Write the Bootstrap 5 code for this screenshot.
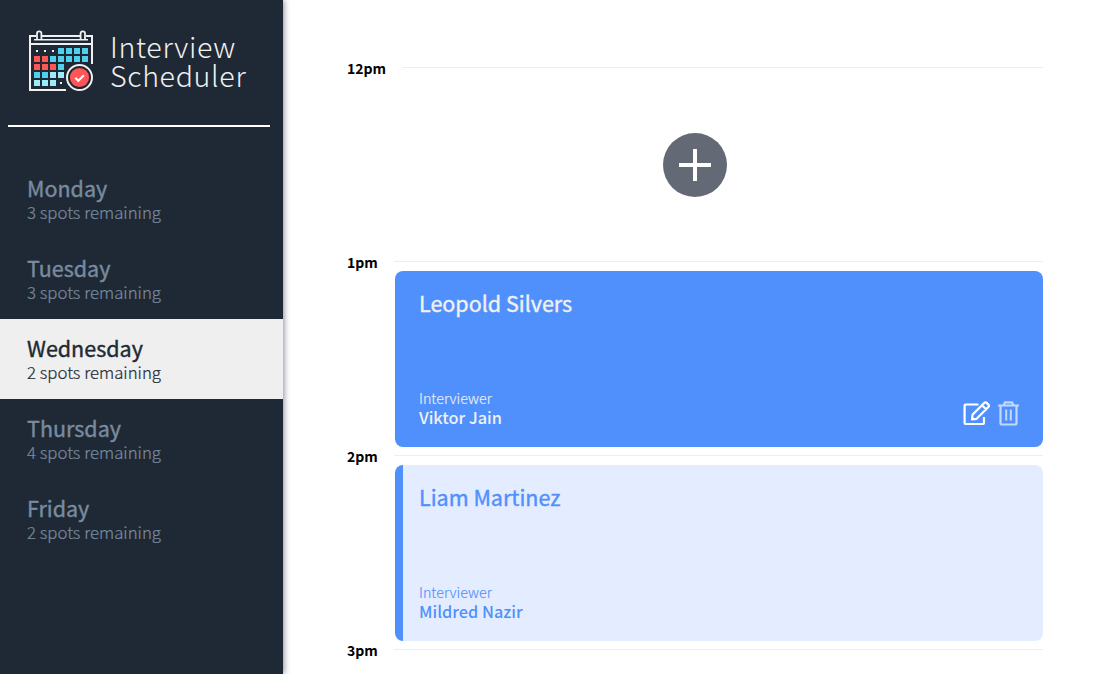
<!DOCTYPE html>
<html lang="en">
<head>
<meta charset="utf-8">
<meta name="viewport" content="width=device-width, initial-scale=1">
<title>Interview Scheduler</title>
<link href="https://cdn.jsdelivr.net/npm/bootstrap@5.3.0/dist/css/bootstrap.min.css" rel="stylesheet">
<style>
  body { font-family: "Noto Sans CJK SC", "Open Sans", sans-serif; color: #000; }
  .sidebar { width: 283px; background: #1f2935; box-shadow: 1px 0 6px rgba(20, 25, 50, .5); z-index: 1; }
  .brand { height: 125px; padding: 26px 0 0 24px; }
  .brand-name { font-size: 28.6px; line-height: 29px; font-weight: 200; letter-spacing: .65px; color: #f0f0f0; padding: 5px 0 0 13px; }
  .divider { height: 2px; margin: 0 13px 32px 8px; background: #fff; }
  .day { height: 80px; padding: 17px 0 0 27px; color: #788b9f; text-decoration: none; }
  .day.active { background: #efefef; color: #1f2935; }
  .day-name { font-size: 21.5px; line-height: 24px; font-weight: 400; -webkit-text-stroke: .4px currentColor; }
  .day-spots { font-size: 16.8px; line-height: 24px; font-weight: 300; -webkit-text-stroke: .2px currentColor; }
  .schedule { padding: 59px 64px 0 64px; }
  .hour { height: 18px; }
  .hour-label { font-size: 14px; line-height: 18px; font-weight: 700; }
  .hour-line { height: 1px; background: #eee; margin: 8px 0 0 16px; }
  .slot { height: 176px; }
  .add { width: 64px; height: 64px; background: #646a75; }
  .booking { margin-left: 48px; border-radius: 8px; padding: 19px 24px 20px 24px; }
  .booked { background: #5090fc; color: #f0f0f0; }
  .available { background: linear-gradient(90deg, #5090fc 8px, #e4edff 8px); color: #5090fc; }
  .student { font-size: 21.5px; line-height: 26px; font-weight: 400; -webkit-text-stroke: .4px currentColor; }
  .role { font-size: 14.3px; line-height: 18px; font-weight: 300; -webkit-text-stroke: .15px currentColor; }
  .interviewer { font-size: 16.3px; line-height: 20px; font-weight: 500; }
  .actions { gap: 7px; padding-top: 10px; }
</style>
</head>
<body>
<div class="d-flex vh-100 overflow-hidden">
  <aside class="sidebar flex-shrink-0 position-relative">
    <div class="brand d-flex">
      <svg width="73" height="72" viewBox="24 26 73 72" fill="none" class="flex-shrink-0">
        <g stroke="#f0f0f0" stroke-width="2">
          <path d="M36 36H30V90H66M41 36H80M86 36H92V64M30 44H92"/>
          <path d="M34 39.7H88" stroke-width="1.5"/>
          <path d="M37 39V33.5a2.2 2.2 0 0 1 4.400 0V39M80.600 39V33.500a2.200 2.200 0 0 1 4.400 0V39" stroke-width="1.800"/>
        </g>
        <path fill="#f0f0f0" d="M36 50h2v2h-2zM44 50h2v2h-2zM52 50h2v2h-2zM60 82h2v2h-2z"/>
        <path fill="#4fd1ee" d="M58 48h6v6h-6zM66 48h6v6h-6zM74 48h6v6h-6zM82 48h6v6h-6zM50 56h6v6h-6zM58 56h6v6h-6zM66 56h6v6h-6zM74 56h6v6h-6zM82 56h6v6h-6zM58 64h6v6h-6zM34 72h6v6h-6zM42 72h6v6h-6z"/>
        <path fill="#ff5555" d="M34 56h6v6h-6zM42 56h6v6h-6zM34 64h6v6h-6zM42 64h6v6h-6zM50 64h6v6h-6z"/>
        <path fill="#9eeaf9" d="M50 72h6v6h-6zM58 72h6v6h-6zM34 80h6v6h-6zM42 80h6v6h-6zM50 80h6v6h-6z"/>
        <circle cx="79.500" cy="77.500" r="12.500" fill="#1f2935" stroke="#f0f0f0" stroke-width="2"/>
        <circle cx="79.500" cy="77.500" r="9.600" fill="#ff5555"/>
        <path d="M75.300 77.800l3 3 5.600-5.500" stroke="#fff" stroke-width="2"/>
      </svg>
      <div class="brand-name">Interview<br>Scheduler</div>
    </div>
    <div class="divider"></div>
    <nav class="d-flex flex-column">
      <a class="day"><div class="day-name">Monday</div><div class="day-spots">3 spots remaining</div></a>
      <a class="day"><div class="day-name">Tuesday</div><div class="day-spots">3 spots remaining</div></a>
      <a class="day active"><div class="day-name">Wednesday</div><div class="day-spots">2 spots remaining</div></a>
      <a class="day"><div class="day-name">Thursday</div><div class="day-spots">4 spots remaining</div></a>
      <a class="day"><div class="day-name">Friday</div><div class="day-spots">2 spots remaining</div></a>
    </nav>
  </aside>
  <main class="schedule flex-grow-1">
    <div class="hour d-flex"><div class="hour-label">12pm</div><div class="hour-line flex-grow-1"></div></div>
    <div class="slot d-flex align-items-center justify-content-center">
      <div class="add rounded-circle d-flex align-items-center justify-content-center">
        <svg width="32" height="32" viewBox="0 0 32 32"><path d="M16 0V32M0 16H32" stroke="#fff" stroke-width="4"/></svg>
      </div>
    </div>
    <div class="hour d-flex"><div class="hour-label">1pm</div><div class="hour-line flex-grow-1"></div></div>
    <div class="slot booking booked d-flex flex-column justify-content-between">
      <div class="student">Leopold Silvers</div>
      <div class="d-flex justify-content-between align-items-center">
        <div><div class="role">Interviewer</div><div class="interviewer">Viktor Jain</div></div>
        <div class="actions d-flex">
          <svg width="28" height="26" viewBox="0 -0.500 28 26" fill="none" stroke="#fff" stroke-width="2.200" stroke-linejoin="round">
            <path d="M15.500 4H2.600a1 1 0 0 0-1 1V22.500a1 1 0 0 0 1 1H20a1 1 0 0 0 1-1V16.500"/>
            <path d="M9.500 14.200L21.300 2.400q1.200-1.200 2.400 0l1.700 1.700q1.200 1.200 0 2.400L13.600 18.300l-4.500.6zM19 4.700l4.100 4.100"/>
          </svg>
          <svg width="21" height="26" viewBox="0 -1 21 26" fill="none" stroke="#c3d8fb" stroke-width="2.200">
            <path d="M0 4.500H21M2.500 4.500V22a1.500 1.500 0 0 0 1.500 1.500H17a1.500 1.500 0 0 0 1.500-1.500V4.500M5.500 4.500L7 1.300H14L15.500 4.500"/>
            <path d="M8.200 8.500V19.500M12.800 8.500V19.500" stroke-width="2"/>
          </svg>
        </div>
      </div>
    </div>
    <div class="hour d-flex"><div class="hour-label">2pm</div><div class="hour-line flex-grow-1"></div></div>
    <div class="slot booking available d-flex flex-column justify-content-between">
      <div class="student">Liam Martinez</div>
      <div><div class="role">Interviewer</div><div class="interviewer">Mildred Nazir</div></div>
    </div>
    <div class="hour d-flex"><div class="hour-label">3pm</div><div class="hour-line flex-grow-1"></div></div>
  </main>
</div>
<script src="https://cdn.jsdelivr.net/npm/bootstrap@5.3.0/dist/js/bootstrap.bundle.min.js"></script>
</body>
</html>
